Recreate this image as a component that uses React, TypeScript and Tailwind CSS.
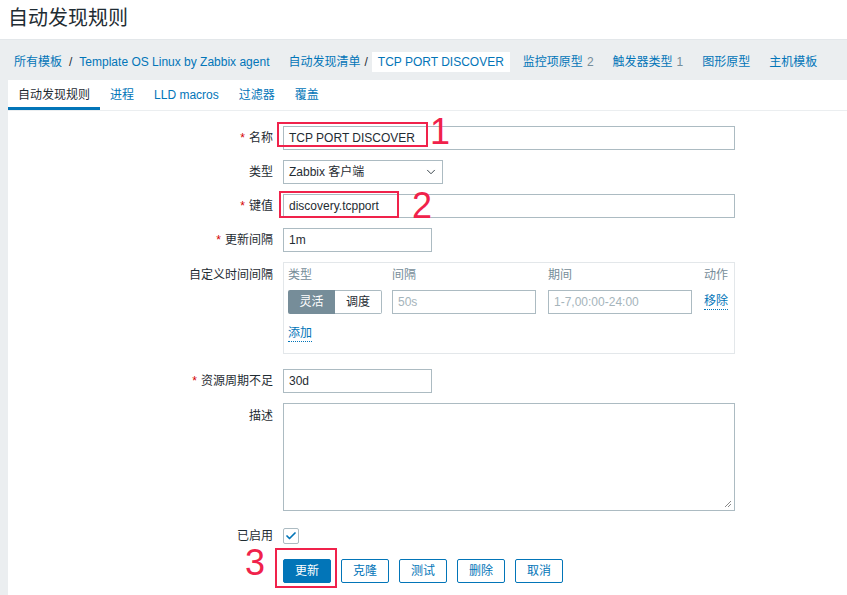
import { ChevronDown, Check } from "lucide-react";

const FONT = { fontFamily: '"Liberation Sans", Arial, "Noto Sans CJK SC", sans-serif' };

// form row with right-aligned label column
function Row({
  label,
  required = false,
  top = false,
  className = "",
  children,
}: {
  label: string;
  required?: boolean;
  top?: boolean;
  className?: string;
  children: React.ReactNode;
}) {
  return (
    <div className={`flex gap-[10px] ${top ? "items-start" : "items-center"} ${className}`}>
      <div className={`w-[265px] shrink-0 text-right text-[12px] text-[#1f2c33] ${top ? "pt-[4px]" : ""}`}>
        {required && <span className="mr-[4px] text-[#d40000]">*</span>}
        {label}
      </div>
      {children}
    </div>
  );
}

function TextBox({ value, width, placeholder }: { value?: string; width: string; placeholder?: string }) {
  return (
    <div
      className={`flex h-[24px] items-center border border-[#acbbc2] bg-white px-[5px] text-[12px] ${width} ${
        placeholder ? "text-[#a5b4bb]" : "text-[#1f2c33]"
      }`}
    >
      {value ?? placeholder}
    </div>
  );
}

const breadcrumbs = [
  { title: "监控项原型", count: "2" },
  { title: "触发器类型", count: "1" },
  { title: "图形原型" },
  { title: "主机模板" },
];

const tabs = ["进程", "LLD macros", "过滤器", "覆盖"];

const buttons = ["克隆", "测试", "删除", "取消"];

export default function App() {
  return (
    <div className="relative min-h-[595px] w-full overflow-hidden bg-[#ebeef0]" style={FONT}>
      {/* Page title */}
      <div className="flex h-[40px] items-center border-b border-[#e3e7ea] bg-white pb-[4px] pl-[8px] text-[20px] text-[#1f2c33]">
        自动发现规则
      </div>

      {/* Breadcrumbs */}
      <div className="flex h-[40px] items-center pl-[14px] pt-[3px] text-[12px] text-[#0275b8]">
        <span>所有模板</span>
        <span className="mx-[7px] text-[#1f2c33]">/</span>
        <span>Template OS Linux by Zabbix agent</span>
        <span className="ml-[19px]">自动发现清单</span>
        <span className="mx-[4px] text-[#1f2c33]">/</span>
        <span className="flex h-[20px] items-center bg-white px-[6px]">TCP PORT DISCOVER</span>
        <div className="ml-[13px] flex gap-[19px]">
          {breadcrumbs.map((b) => (
            <span key={b.title}>
              {b.title}
              {b.count && <span className="ml-[4px] text-[#768d99]">{b.count}</span>}
            </span>
          ))}
        </div>
      </div>

      {/* Content */}
      <div className="ml-[8px] min-h-[515px] bg-white">
        <div className="flex h-[31px] border-b border-[#ebeef0] text-[12px]">
          <div className="flex items-center border-b-[3px] border-[#0275b8] px-[10px] pt-[3px] text-[#1f2c33]">
            自动发现规则
          </div>
          {tabs.map((t) => (
            <div key={t} className="flex items-center px-[10px] text-[#0275b8]">
              {t}
            </div>
          ))}
        </div>

        <div className="pt-[15px]">
          <Row label="名称" required className="mb-[10px]">
            <TextBox value="TCP PORT DISCOVER" width="w-[452px]" />
          </Row>

          <Row label="类型" className="mb-[10px]">
            <div className="flex h-[24px] w-[160px] items-center justify-between border border-[#acbbc2] bg-white pl-[5px] pr-[4px] text-[12px] text-[#1f2c33]">
              <span>Zabbix 客户端</span>
              <ChevronDown className="h-[14px] w-[14px] text-[#1f2c33]" strokeWidth={1.5} />
            </div>
          </Row>

          <Row label="键值" required className="mb-[10px]">
            <TextBox value="discovery.tcpport" width="w-[452px]" />
          </Row>

          <Row label="更新间隔" required className="mb-[10px]">
            <TextBox value="1m" width="w-[149px]" />
          </Row>

          <Row label="自定义时间间隔" top className="mb-[15px]">
            <div className="h-[92px] w-[452px] border border-[#e3e7ea] px-[4px] pt-[5px]">
              <div className="grid grid-cols-[104px_156px_156px_auto] text-[12px] leading-[14px] text-[#768d99]">
                <span>类型</span>
                <span>间隔</span>
                <span>期间</span>
                <span>动作</span>
              </div>
              <div className="mt-[8px] grid grid-cols-[104px_156px_156px_auto] items-center text-[12px]">
                <div className="flex h-[24px] w-[94px]">
                  <div className="flex w-[47px] items-center justify-center rounded-l-[2px] bg-[#768d99] text-white">
                    灵活
                  </div>
                  <div className="flex w-[47px] items-center justify-center rounded-r-[2px] border border-l-0 border-[#acbbc2] text-[#1f2c33]">
                    调度
                  </div>
                </div>
                <TextBox placeholder="50s" width="w-[144px]" />
                <TextBox placeholder="1-7,00:00-24:00" width="w-[144px]" />
                <span className="w-fit border-b border-dotted border-[#0275b8] leading-[15px] text-[#0275b8]">移除</span>
              </div>
              <div className="mt-[12px] w-fit border-b border-dotted border-[#0275b8] text-[12px] leading-[15px] text-[#0275b8]">
                添加
              </div>
            </div>
          </Row>

          <Row label="资源周期不足" required className="mb-[10px]">
            <TextBox value="30d" width="w-[149px]" />
          </Row>

          <Row label="描述" top className="mb-[13px]">
            <div className="relative h-[108px] w-[452px] border border-[#acbbc2] bg-white">
              <svg className="absolute bottom-[2px] right-[2px]" width="8" height="8" viewBox="0 0 8 8">
                <path d="M7 1L1 7M7 4L4 7" stroke="#8a8a8a" strokeWidth="1" />
              </svg>
            </div>
          </Row>

          <Row label="已启用" className="mb-[11px] h-[24px]">
            <div className="flex h-[16px] w-[16px] items-center justify-center rounded-[2px] border border-[#acbbc2] bg-white">
              <Check className="h-[12px] w-[12px] text-[#0275b8]" strokeWidth={3.5} />
            </div>
          </Row>

          <div className="flex gap-[10px] pl-[275px] text-[12px]">
            <button className="h-[24px] rounded-[2px] border border-[#0275b8] bg-[#0275b8] px-[11px] text-white">
              更新
            </button>
            {buttons.map((b) => (
              <button key={b} className="h-[24px] rounded-[2px] border border-[#0275b8] bg-white px-[11px] text-[#0275b8]">
                {b}
              </button>
            ))}
          </div>
        </div>
      </div>

      {/* Red annotations */}
      <div className="absolute left-[277px] top-[122px] h-[25px] w-[151px] border-2 border-[#f0224b]" />
      <div className="absolute left-[430px] top-[114px] text-[36px] leading-[36px] text-[#f0224b]">1</div>
      <div className="absolute left-[279px] top-[191px] h-[27px] w-[120px] border-2 border-[#f0224b]" />
      <div className="absolute left-[412px] top-[188px] text-[36px] leading-[36px] text-[#f0224b]">2</div>
      <div className="absolute left-[275px] top-[548px] h-[40px] w-[62px] border-2 border-[#f0224b]" />
      <div className="absolute left-[245px] top-[545px] text-[36px] leading-[36px] text-[#f0224b]">3</div>
    </div>
  );
}
